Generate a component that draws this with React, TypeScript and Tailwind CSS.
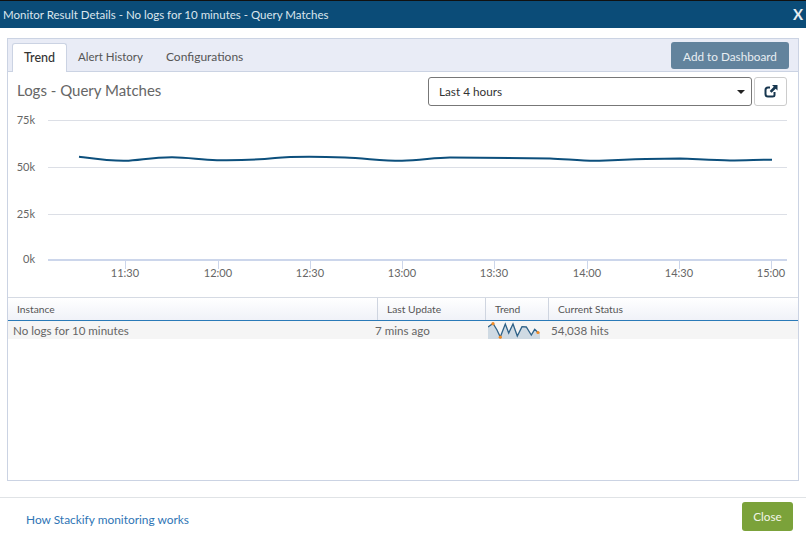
const yTicks = [
  { label: "75k", y: 120 },
  { label: "50k", y: 167 },
  { label: "25k", y: 214 },
];

const xTicks = [
  { label: "11:30", x: 125 },
  { label: "12:00", x: 218 },
  { label: "12:30", x: 310 },
  { label: "13:00", x: 402 },
  { label: "13:30", x: 494 },
  { label: "14:00", x: 587 },
  { label: "14:30", x: 679 },
  { label: "15:00", x: 771 },
];

function Chart() {
  return (
    <svg width="789" height="189" viewBox="8 108 789 189" className="block">
      {yTicks.map((t) => (
        <g key={t.label}>
          <line x1="48" x2="787" y1={t.y + 0.5} y2={t.y + 0.5} stroke="#dcdfe6" />
          <text x="35" y={t.y + 4} textAnchor="end" fontSize="11" fill="#666">
            {t.label}
          </text>
        </g>
      ))}
      <line x1="48" x2="787" y1="260" y2="260" stroke="#ccd6eb" strokeWidth="2" />
      <text x="35" y="263" textAnchor="end" fontSize="11" fill="#666">
        0k
      </text>
      {xTicks.map((t) => (
        <g key={t.label}>
          <line x1={t.x + 0.5} x2={t.x + 0.5} y1="260" y2="269" stroke="#ccd6eb" />
          <text x={t.x} y="277" textAnchor="middle" fontSize="11" fill="#666">
            {t.label}
          </text>
        </g>
      ))}
      <path
        d="M79 156.7C95 158.8 110 161 125 160.8C140 160.5 150 157.3 172 157.2C190 157.3 200 160 217 160.2C235 160.5 255 160 275 158C290 156.7 320 156.7 345 157.5C365 158.3 385 161 402 160.8C420 160.5 435 157.5 450 157.5C470 158 510 158 550 158.5C565 159 580 160.8 595 160.8C615 160 650 158.5 680 158.5C695 159 715 160.5 730 160.5C745 160.5 760 159.7 772 159.7"
        fill="none"
        stroke="#0c4f7c"
        strokeWidth="2"
      />
    </svg>
  );
}

function Sparkline() {
  const line =
    "M0 5L5 1.5L9 8L12.3 15L17.3 2L20.7 11L25 2L29.3 14L34 4.7L38.3 5L43.3 13L46.7 7.3L50 10.5";
  return (
    <svg width="52" height="17" viewBox="0 0 52 17" className="block">
      <path d={`${line}L52 10V17H0Z`} fill="#cfdae3" />
      <path d={line} fill="none" stroke="#2f6288" strokeWidth="1.3" />
      <circle cx="5" cy="1.7" r="1.6" fill="#f08a24" />
      <circle cx="12.3" cy="15.2" r="1.6" fill="#f08a24" />
      <circle cx="50" cy="10.5" r="1.6" fill="#f08a24" />
    </svg>
  );
}

export default function App() {
  return (
    <div className="flex h-[537px] w-[806px] flex-col overflow-hidden bg-white font-['Lato','Noto_Sans',sans-serif]">
      <div className="flex h-[28px] shrink-0 items-center justify-between border-t border-[#111] bg-[#0b4c78] pl-[3px] pr-[3px]">
        <span className="text-[11.5px] text-[#dbe6ee]">
          Monitor Result Details - No logs for 10 minutes - Query Matches
        </span>
        <span className="text-[15px] font-bold text-[#e6edf2]">X</span>
      </div>

      <div className="mx-[7px] mt-[10px] flex h-[443px] shrink-0 flex-col border border-[#cbd3e3]">
        <div className="flex h-[33px] shrink-0 items-end justify-between border-b border-[#cbd3e3] bg-[#e9ecf6] pl-[4px] pr-[9px]">
          <div className="flex items-end">
            <div className="-mb-px flex h-[29px] w-[55px] items-center justify-center rounded-t-[3px] border border-b-0 border-[#cbd3e3] bg-white text-[12.5px] font-medium text-[#333]">
              Trend
            </div>
            <div className="flex h-[28px] items-center pl-[11px] pr-[23px] text-[11.5px] text-[#555]">
              Alert History
            </div>
            <div className="flex h-[28px] items-center text-[12px] text-[#555]">
              Configurations
            </div>
          </div>
          <button className="mb-[2px] h-[27px] w-[118px] rounded-[3px] bg-[#62839d] pt-[2px] text-[11.75px] text-[#e8eef2]">
            Add to Dashboard
          </button>
        </div>

        <div className="flex h-[36px] shrink-0 items-center justify-between pl-[9px] pr-[11px] pt-[2px]">
          <span className="mb-[2px] text-[15px] text-[#666]">Logs - Query Matches</span>
          <div className="flex items-center gap-[2px]">
            <div className="flex h-[29px] w-[324px] items-center justify-between rounded-[3px] border border-[#777] bg-white pl-[10px] pr-[6px] pt-[1px] text-[11.75px] text-[#333]">
              Last 4 hours
              <span className="h-0 w-0 border-x-[4px] border-t-[4px] border-x-transparent border-t-[#222]" />
            </div>
            <div className="flex h-[29px] w-[33px] items-center justify-center rounded-[3px] border border-[#ccc] bg-white">
              <svg width="14" height="14" viewBox="0 0 14 14">
                <path
                  d="M10.5 8V11C10.5 12 9.5 12.5 8.5 12.5H4C2.5 12.5 1.5 11.5 1.5 10V6C1.5 4.5 2.5 3.5 4 3.5H6"
                  fill="none"
                  stroke="#17364f"
                  strokeWidth="2"
                />
                <path d="M8 1H13.5V6.5L11.7 4.7L7.5 8.8L5.7 7L9.8 2.8Z" fill="#17364f" />
              </svg>
            </div>
          </div>
        </div>
        <div className="h-[189px] shrink-0">
          <Chart />
        </div>

        <div className="flex h-[24px] shrink-0 border-y border-[#d5dae3] border-b-[#2a7ab8] bg-gradient-to-b from-white to-[#f0f2f8] text-[10.25px] text-[#555]">
          <div className="flex w-[370px] items-center border-r border-[#cfd5e0] pl-[9px] pt-[1px]">Instance</div>
          <div className="flex w-[108px] items-center border-r border-[#cfd5e0] pl-[9px] pt-[1px]">Last Update</div>
          <div className="flex w-[63px] items-center border-r border-[#cfd5e0] pl-[9px] pt-[1px]">Trend</div>
          <div className="flex flex-1 items-center pl-[9px] pt-[1px]">Current Status</div>
        </div>
        <div className="flex h-[18px] shrink-0 items-center bg-[#f5f5f5] pt-[1px] text-[11.6px] text-[#666]">
          <div className="w-[367px] pl-[5px]">No logs for 10 minutes</div>
          <div className="w-[113px]">7 mins ago</div>
          <div className="w-[63px]">
            <Sparkline />
          </div>
          <div>54,038 hits</div>
        </div>
      </div>

      <div className="mt-[16px] flex flex-1 items-center justify-between border-t border-[#e0e3e6] pb-[2px] pl-[26px] pr-[13px]">
        <a className="mt-[6px] text-[11.9px] text-[#2f75b5]">How Stackify monitoring works</a>
        <button className="h-[29px] w-[51px] rounded-[3px] bg-[#7ba23a] text-[11.75px] text-[#f2f6e8]">
          Close
        </button>
      </div>
    </div>
  );
}
